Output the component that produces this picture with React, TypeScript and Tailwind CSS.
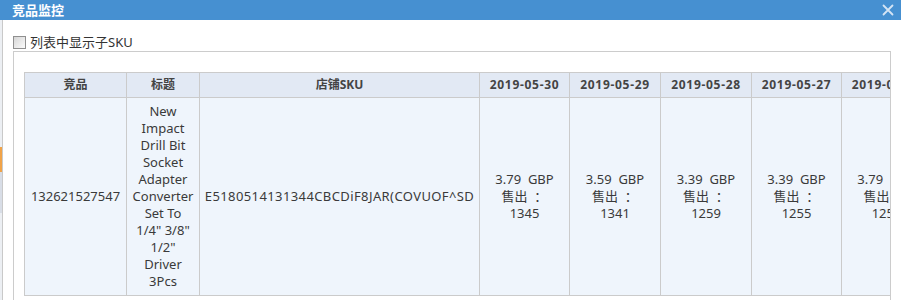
import React from 'react';

const dates = [
  { d: '2019-05-30', price: '3.79', sold: '1345', w: 90 },
  { d: '2019-05-29', price: '3.59', sold: '1341', w: 91 },
  { d: '2019-05-28', price: '3.39', sold: '1259', w: 91 },
  { d: '2019-05-27', price: '3.39', sold: '1255', w: 90 },
  { d: '2019-05-26', price: '3.79', sold: '1252', w: 90 },
  { d: '2019-05-25', price: '3.79', sold: '1248', w: 90 },
];

const titleLines = ['New', 'Impact', 'Drill Bit', 'Socket', 'Adapter', 'Converter', 'Set To', '1/4" 3/8"', '1/2"', 'Driver', '3Pcs'];

export default function App() {
  return (
    <div
      className="w-[901px] h-[300px] overflow-hidden bg-white text-[#333]"
      style={{ fontFamily: '"Noto Sans", "Noto Sans CJK SC", sans-serif' }}
    >
      {/* 标题栏 */}
      <div className="h-[20px] bg-[#4690d1] flex items-center justify-between pl-[12px] pr-[6px]">
        <span className="text-white text-[13px] font-bold leading-none">竞品监控</span>
        <svg width="12" height="12" viewBox="0 0 12 12" className="mr-[1px]">
          <path d="M1.5 1.5 L10.5 10.5 M10.5 1.5 L1.5 10.5" stroke="#d4e4f4" strokeWidth="1.8" strokeLinecap="round" />
        </svg>
      </div>

      <div className="flex h-[280px]">
        {/* 背后页面的边缘 */}
        <div className="w-[2px] bg-[#eceff3] flex flex-col shrink-0">
          <div className="h-[127px]" />
          <div className="h-[25px] bg-[#f0a348]" />
          <div className="h-[41px] bg-[#d8dde6]" />
        </div>
        <div className="w-px bg-[#c9c9c9] shrink-0" />

        <div className="flex-1 pl-[10px] pt-[16px] min-w-0">
          <label className="flex items-center gap-[4px] h-[13px] text-[13px] text-[#333] leading-none">
            <span className="w-[13px] h-[13px] border border-[#8f8f8f] bg-gradient-to-br from-[#d6d6d6] to-[#fbfbfb] shrink-0" />
            列表中显示子SKU
          </label>

          <div className="mt-[2px] w-[878px] h-[260px] border border-[#cccccc] overflow-hidden pt-[20px] pl-[10px]">
            <table className="border-collapse table-fixed text-center" style={{ width: 102 + 73 + 280 + 90 * 6 + 2 }}>
              <colgroup>
                <col className="w-[102px]" />
                <col className="w-[73px]" />
                <col className="w-[280px]" />
                {dates.map((x) => (
                  <col key={x.d} style={{ width: x.w }} />
                ))}
              </colgroup>
              <thead>
                <tr className="h-[25px] bg-[#e2e9f4] text-[12px] font-bold text-[#444]">
                  <th className="border border-[#cbcbcb] p-0">竞品</th>
                  <th className="border border-[#cbcbcb] p-0">标题</th>
                  <th className="border border-[#cbcbcb] p-0">店铺SKU</th>
                  {dates.map((x) => (
                    <th key={x.d} className="border border-[#cbcbcb] p-0 whitespace-nowrap tracking-[0.7px]">
                      {x.d}
                    </th>
                  ))}
                </tr>
              </thead>
              <tbody>
                <tr className="bg-[#eff5fc] text-[13px] leading-[17px] text-[#3a3a3a]">
                  <td className="border border-[#cbcbcb] px-[4px] py-[5px]">132621527547</td>
                  <td className="border border-[#cbcbcb] px-[2px] py-[5px]">
                    {titleLines.map((l) => (
                      <div key={l}>{l}</div>
                    ))}
                  </td>
                  <td className="border border-[#cbcbcb] px-[4px] py-[5px] whitespace-nowrap tracking-[0.4px]">
                    E5180514131344CBCDiF8JAR(COVUOF^SD
                  </td>
                  {dates.map((x) => (
                    <td key={x.d} className="border border-[#cbcbcb] px-[4px] py-[5px] whitespace-pre">
                      <div>{x.price}  GBP</div>
                      <div>售出  ：</div>
                      <div>{x.sold}</div>
                    </td>
                  ))}
                </tr>
              </tbody>
            </table>
          </div>
        </div>
      </div>
    </div>
  );
}
